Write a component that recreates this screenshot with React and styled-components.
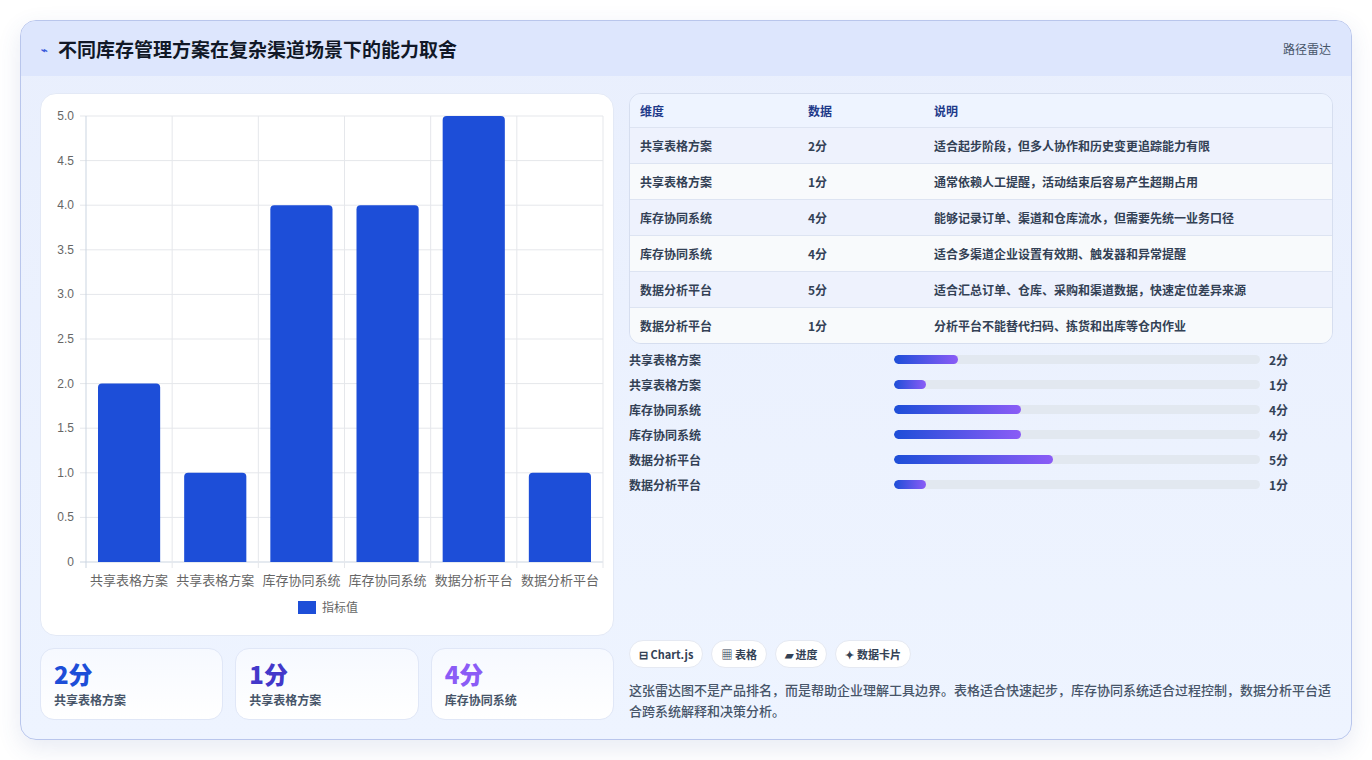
import React from "react";
import styled, { createGlobalStyle } from "styled-components";

const Global = createGlobalStyle`
  html,body{margin:0;background:#fff;font-family:"Noto Sans CJK SC","Noto Sans",sans-serif;}
`;
const Page = styled.div`padding:20px;height:760px;box-sizing:border-box;`;
const Card = styled.div`
  height:720px;box-sizing:border-box;border:1px solid #b9c6ec;border-radius:16px;overflow:hidden;
  background:linear-gradient(180deg,#e9effd,#eef4ff);box-shadow:0 8px 24px rgba(60,80,160,0.12);
  display:flex;flex-direction:column;
`;
const Header = styled.div`
  height:55px;flex:none;display:flex;align-items:center;justify-content:space-between;
  padding:0 20px;background:#dde6fd;
`;
const Title = styled.h1`margin:0;font-size:19px;font-weight:700;color:#111827;display:flex;align-items:center;gap:10px;`;
const Tag = styled.span`font-size:12px;color:#475569;`;
const Body = styled.div`flex:1;display:grid;grid-template-columns:574px 1fr;gap:15px;padding:17px 18px 18px 19px;min-height:0;`;
const Col = styled.div`display:flex;flex-direction:column;gap:12px;min-height:0;`;
const ChartBox = styled.div`
  height:543px;box-sizing:border-box;background:#fff;border:1px solid #e3e9f6;border-radius:16px;position:relative;
`;
const Stats = styled.div`display:grid;grid-template-columns:repeat(3,1fr);gap:12px;`;
const Stat = styled.div`
  height:72px;box-sizing:border-box;border:1px solid #e0e7f7;border-radius:14px;background:linear-gradient(180deg,#f6f9ff,#fff);
  padding:10px 13px;
`;
const StatVal = styled.div`font-size:24px;font-weight:800;color:${p=>p.c};line-height:30px;`;
const StatLab = styled.div`font-size:12px;font-weight:600;color:#475569;margin-top:2px;`;
const Table = styled.div`border:1px solid #d6deef;border-radius:12px;overflow:hidden;`;
const Row = styled.div`
  display:grid;grid-template-columns:168px 126px 1fr;height:${p=>p.h?33:35}px;align-items:center;padding-left:10px;
  font-size:12px;font-weight:${p=>p.h?700:600};color:${p=>p.h?"#1e3a8a":"#334155"};
  background:${p=>p.h?"#eef4ff":p.alt?"#f8fafc":"#eef2fd"};
  border-top:${p=>p.first?"none":"1px solid #dde4f2"};
`;
const Bars = styled.div`display:flex;flex-direction:column;gap:9px;margin-top:7px;`;
const BarRow = styled.div`display:grid;grid-template-columns:265px 366px 1fr;align-items:center;height:16px;font-size:12px;font-weight:600;color:#334155;`;
const Track = styled.div`height:9px;border-radius:5px;background:#e2e8f0;overflow:hidden;`;
const Fill = styled.div`height:100%;border-radius:5px;background:linear-gradient(90deg,#1d4ed8,#8b5cf6);`;
const Val = styled.span`padding-left:9px;`;
const Chips = styled.div`display:flex;gap:8px;margin-top:auto;`;
const Chip = styled.span`
  height:28px;box-sizing:border-box;padding:0 9px;border:1px solid #e5e9f2;border-radius:14px;background:#fff;
  display:flex;align-items:center;gap:4px;font-size:11px;font-weight:700;color:#334155;
`;
const Note = styled.p`margin:11px 0 0;font-size:13px;line-height:21px;color:#475569;font-weight:500;`;

const cats=["共享表格方案","共享表格方案","库存协同系统","库存协同系统","数据分析平台","数据分析平台"];
const vals=[2,1,4,4,5,1];
const notes=["适合起步阶段，但多人协作和历史变更追踪能力有限","通常依赖人工提醒，活动结束后容易产生超期占用","能够记录订单、渠道和仓库流水，但需要先统一业务口径","适合多渠道企业设置有效期、触发器和异常提醒","适合汇总订单、仓库、采购和渠道数据，快速定位差异来源","分析平台不能替代扫码、拣货和出库等仓内作业"];

function Chart(){
  const L=45,T=22,W=517,H=446,cw=W/6;
  const ticks=[0,0.5,1,1.5,2,2.5,3,3.5,4,4.5,5];
  return (
    <svg width="574" height="541" style={{display:"block"}}>
      {ticks.map(t=>{const y=T+H-t/5*H;return <g key={t}>
        <line x1={L-6} x2={L+W} y1={y} y2={y} stroke={t===0?"#cbd5e1":"#e5e7eb"}/>
        <text x={L-12} y={y+4} fontSize="12" fill="#666" textAnchor="end" fontFamily="Liberation Sans">{t===0?"0":t.toFixed(1)}</text></g>})}
      {[0,1,2,3,4,5,6].map(i=><line key={i} x1={L+i*cw} x2={L+i*cw} y1={T} y2={T+H+6} stroke={i===0?"#cbd5e1":"#e5e7eb"}/>)}
      {vals.map((v,i)=>{const h=v/5*H,x=L+i*cw+12,w=cw-24,y=T+H-h;return <path key={i} fill="#1d4ed8" d={`M${x} ${T+H}V${y+4}Q${x} ${y} ${x+4} ${y}H${x+w-4}Q${x+w} ${y} ${x+w} ${y+4}V${T+H}Z`}/>})}
      {cats.map((c,i)=><text key={i} x={L+i*cw+cw/2} y={T+H+23} fontSize="13" fill="#666" textAnchor="middle">{c}</text>)}
      <rect x="257" y="507" width="18" height="13" fill="#1d4ed8"/>
      <text x="281" y="518" fontSize="12" fill="#666">指标值</text>
    </svg>
  );
}

export default function App(){
  return (<Page><Global/><Card>
    <Header><Title><span style={{fontSize:11,color:"#3b5bdb"}}>⌁</span>不同库存管理方案在复杂渠道场景下的能力取舍</Title><Tag>路径雷达</Tag></Header>
    <Body>
      <Col>
        <ChartBox><Chart/></ChartBox>
        <Stats>
          <Stat><StatVal c="#1d4ed8">2分</StatVal><StatLab>共享表格方案</StatLab></Stat>
          <Stat><StatVal c="#4338ca">1分</StatVal><StatLab>共享表格方案</StatLab></Stat>
          <Stat><StatVal c="#8b5cf6">4分</StatVal><StatLab>库存协同系统</StatLab></Stat>
        </Stats>
      </Col>
      <Col style={{gap:0}}>
        <Table>
          <Row h first><span>维度</span><span>数据</span><span>说明</span></Row>
          {cats.map((c,i)=><Row key={i} alt={i%2===1}><span>{c}</span><span>{vals[i]}分</span><span>{notes[i]}</span></Row>)}
        </Table>
        <Bars>
          {cats.map((c,i)=><BarRow key={i}><span>{c}</span><Track><Fill style={{width:`${vals[i]/11.5*100}%`}}/></Track><Val>{vals[i]}分</Val></BarRow>)}
        </Bars>
        <Chips>
          <Chip>⊟ Chart.js</Chip><Chip>▦ 表格</Chip><Chip>▰ 进度</Chip><Chip>✦ 数据卡片</Chip>
        </Chips>
        <Note>这张雷达图不是产品排名，而是帮助企业理解工具边界。表格适合快速起步，库存协同系统适合过程控制，数据分析平台适合跨系统解释和决策分析。</Note>
      </Col>
    </Body>
  </Card></Page>);
}
